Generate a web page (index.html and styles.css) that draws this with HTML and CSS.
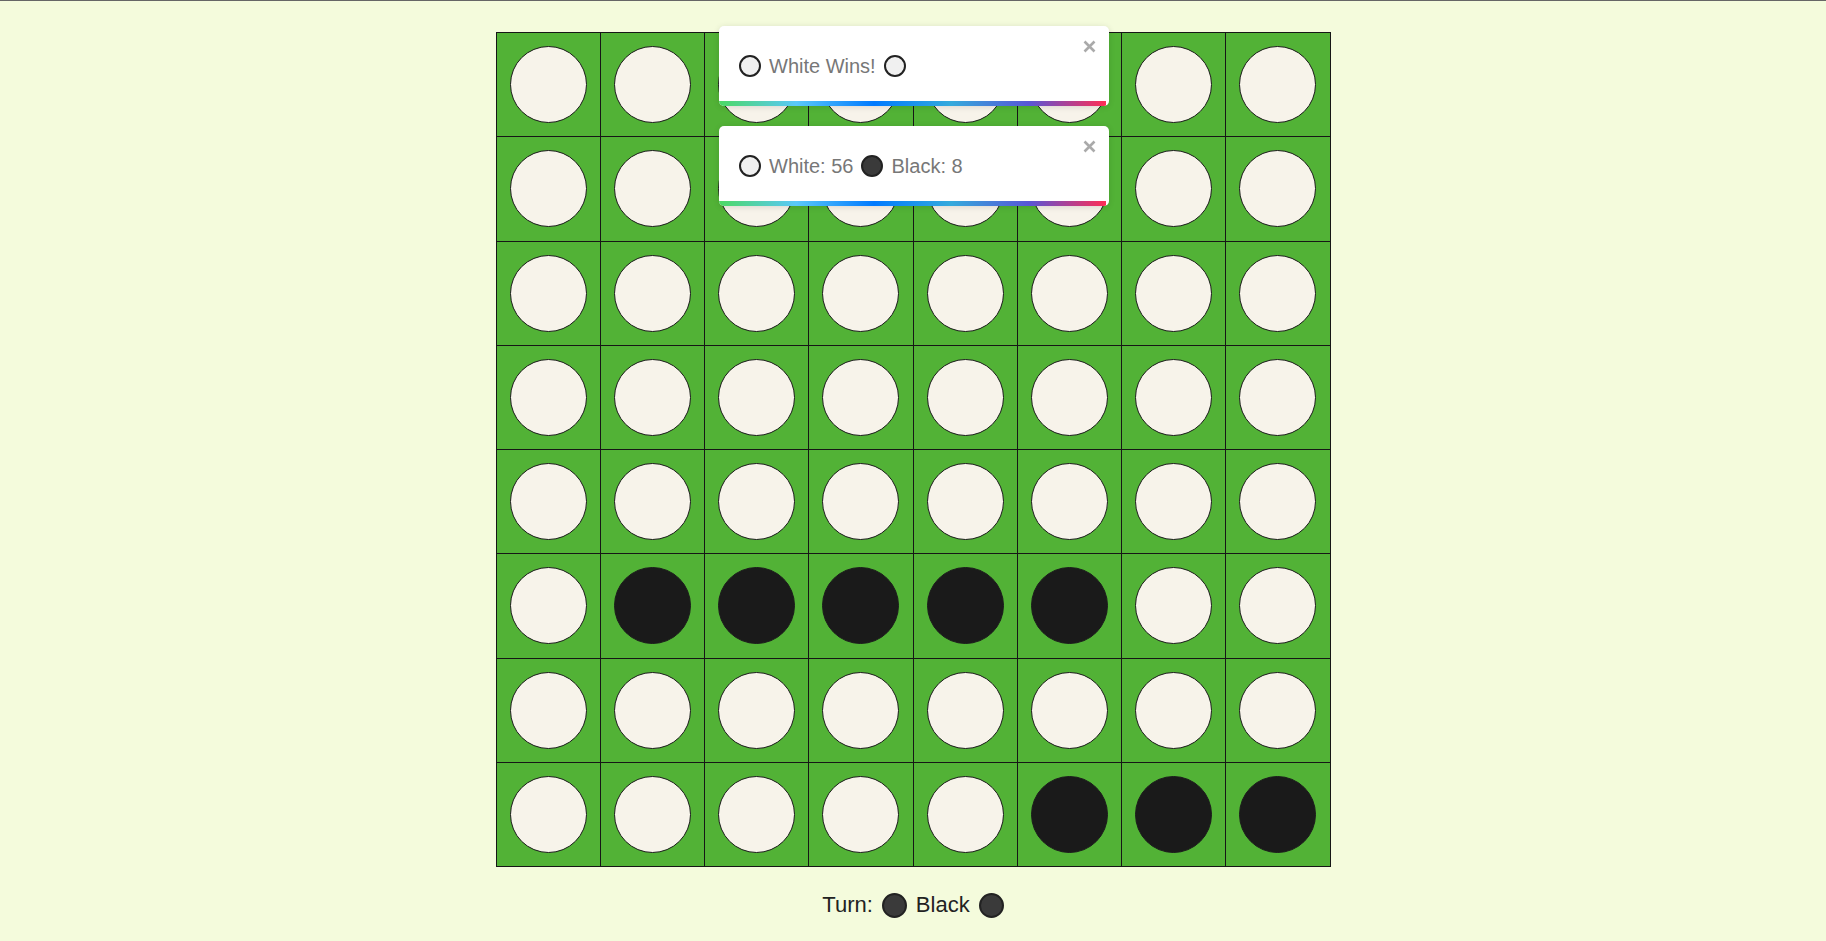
FILE: index.html
```html
<!DOCTYPE html>
<html lang="en">
<head>
<meta charset="utf-8">
<title>Othello</title>
<link rel="stylesheet" href="styles.css">
</head>
<body>
<div class="page">
  <div class="board" id="board"></div>
  <div class="turn">
    <span>Turn:</span>
    <span class="dot dot-black big"></span>
    <span>Black</span>
    <span class="dot dot-black big"></span>
  </div>
</div>

<div class="toasts">
  <div class="toast">
    <div class="toast-body">
      <span class="dot dot-white"></span>
      <span>White Wins!</span>
      <span class="dot dot-white"></span>
    </div>
    <svg class="close" width="13" height="13" viewBox="0 0 13 13"><path d="M1.5 1.5 L11.5 11.5 M11.5 1.5 L1.5 11.5" stroke="#aaa" stroke-width="2.6" fill="none"/></svg>
    <div class="bar"></div>
  </div>
  <div class="toast">
    <div class="toast-body">
      <span class="dot dot-white"></span>
      <span>White: 56</span>
      <span class="dot dot-black"></span>
      <span>Black: 8</span>
    </div>
    <svg class="close" width="13" height="13" viewBox="0 0 13 13"><path d="M1.5 1.5 L11.5 11.5 M11.5 1.5 L1.5 11.5" stroke="#aaa" stroke-width="2.6" fill="none"/></svg>
    <div class="bar"></div>
  </div>
</div>
<script src="script.js"></script>
</body>
</html>
```

FILE: styles.css
```css
html, body {
  margin: 0;
  padding: 0;
}
html {
  background: #f4fbdc;
}
body {
  border-top: 1px solid #666;
  font-family: "Liberation Sans", Arial, sans-serif;
  position: relative;
}
.page {
  display: flex;
  flex-direction: column;
  align-items: center;
  padding-top: 31px;
}
.board {
  width: 835px;
  height: 835px;
  box-sizing: border-box;
  padding: 1px;
  gap: 1px;
  background: #161616;
  display: grid;
  grid-template-columns: repeat(8, 1fr);
  grid-template-rows: repeat(8, 1fr);
}
.cell {
  background: #52b236;
  display: flex;
  align-items: center;
  justify-content: center;
}
.piece {
  width: 77px;
  height: 77px;
  border-radius: 50%;
  box-sizing: border-box;
  border: 1px solid #1c1c1c;
}
.piece.w { background: #f7f3ea; }
.piece.b { background: #1a1a1a; }

.turn {
  margin-top: 25px;
  display: flex;
  align-items: center;
  gap: 9px;
  font-size: 22px;
  color: #222;
}
.dot {
  display: inline-block;
  width: 22px;
  height: 22px;
  border-radius: 50%;
  box-sizing: border-box;
  border: 2px solid #222;
}
.dot.big {
  width: 25px;
  height: 25px;
}
.dot-white { background: #f0f0f0; }
.dot-black { background: #3a3a3a; }

.toasts {
  position: absolute;
  top: 25px;
  left: 50%;
  margin-left: -194px;
  width: 390px;
  display: flex;
  flex-direction: column;
  gap: 20px;
}
.toast {
  position: relative;
  height: 80px;
  background: #fff;
  border-radius: 5px;
  box-shadow: 0 1px 6px rgba(0, 0, 0, 0.12);
  overflow: hidden;
  display: flex;
  align-items: center;
  padding: 0 20px;
  box-sizing: border-box;
}
.toast-body {
  display: flex;
  align-items: center;
  gap: 8px;
  font-size: 20px;
  color: #777;
}
.close {
  position: absolute;
  top: 14px;
  right: 13px;
}
.bar {
  position: absolute;
  left: 0;
  bottom: 0;
  width: 99.3%;
  height: 5px;
  background: linear-gradient(to right, #4cd964, #5ac8fa, #007aff, #34aadc, #5856d6, #ff2d55);
}
```

FILE: script.js
```js
var layout = [
  "WWWWWWWW",
  "WWWWWWWW",
  "WWWWWWWW",
  "WWWWWWWW",
  "WWWWWWWW",
  "WBBBBBWW",
  "WWWWWWWW",
  "WWWWWBBB"
];
var board = document.getElementById("board");
layout.forEach(function (row) {
  row.split("").forEach(function (c) {
    var cell = document.createElement("div");
    cell.className = "cell";
    var p = document.createElement("div");
    p.className = "piece " + (c === "W" ? "w" : "b");
    cell.appendChild(p);
    board.appendChild(cell);
  });
});
```
